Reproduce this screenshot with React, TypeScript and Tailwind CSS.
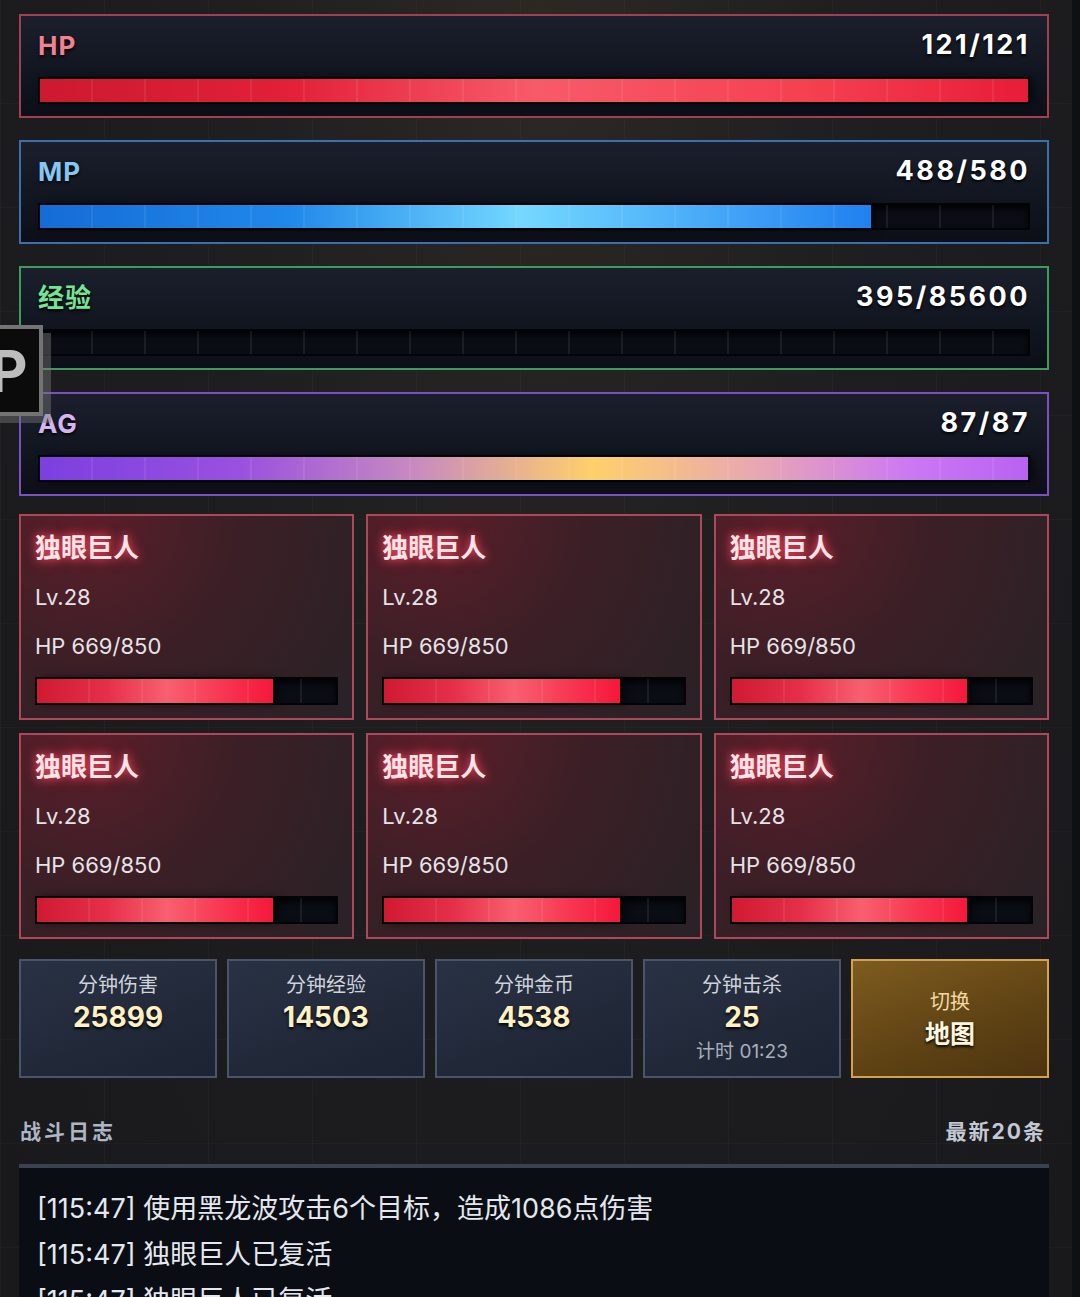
import React from 'react';

const FONT = "font-['Inter','Noto_Sans_CJK_SC',sans-serif]";

const SEGMENTS =
  'bg-[repeating-linear-gradient(90deg,transparent_0px,transparent_51px,rgba(255,255,255,0.07)_51px,rgba(255,255,255,0.07)_53px)]';

interface BarProps {
  pct: number;
  fill: string;
  height: string;
}

const Bar = ({ pct, fill, height }: BarProps) => (
  <div className={`relative ${height} border-2 border-[#030407] bg-[#0a0d14] shadow-[inset_0_4px_6px_rgba(0,0,0,0.85)]`}>
    {pct > 0 && (
      <div
        className={`h-full ${fill} shadow-[4px_0_10px_rgba(0,0,0,0.7)]`}
        style={{ width: `${pct}%` }}
      />
    )}
    <div className={`pointer-events-none absolute inset-0 ${SEGMENTS}`} />
  </div>
);

interface StatPanelProps {
  label: string;
  value: string;
  pct: number;
  border: string;
  labelColor: string;
  fill: string;
}

const StatPanel = ({ label, value, pct, border, labelColor, fill }: StatPanelProps) => (
  <div className={`h-[104px] border-2 ${border} bg-[linear-gradient(180deg,#1a1f2b_0%,#111520_60%,#0c0f17_100%)] px-[17px] pt-[14px]`}>
    <div className="flex h-[30px] items-center justify-between">
      <span className={`text-[26px] font-bold tracking-[1px] ${labelColor} [text-shadow:0_2px_3px_rgba(0,0,0,0.9)]`}>
        {label}
      </span>
      <span className="text-[27px] font-bold tracking-[2.5px] text-white [text-shadow:0_2px_3px_rgba(0,0,0,0.9)]">
        {value}
      </span>
    </div>
    <div className="mt-[17px]">
      <Bar pct={pct} fill={fill} height="h-[27px]" />
    </div>
  </div>
);

const MonsterCard = () => (
  <div className="h-[206px] border-2 border-[#b0465a] bg-[radial-gradient(circle_at_20%_0%,#5c1e2a_0%,#3c1f26_45%,#282226_100%)] px-[14px] pt-[16px]">
    <div className="h-[32px] text-[26px] font-bold leading-[32px] text-[#ffe4e8] [text-shadow:0_0_8px_rgba(255,70,95,0.95),0_0_14px_rgba(255,70,95,0.5)]">
      独眼巨人
    </div>
    <div className="mt-[19px] h-[28px] text-[22px] leading-[28px] text-[#e4e4e8]">Lv.28</div>
    <div className="mt-[21px] h-[28px] text-[22px] leading-[28px] text-[#e4e4e8]">HP 669/850</div>
    <div className="mt-[17px]">
      <Bar
        pct={78.7}
        height="h-[28px]"
        fill="bg-[linear-gradient(90deg,#cf1a32_0%,#e6304a_30%,#f8606f_55%,#f83450_80%,#f5183a_100%)]"
      />
    </div>
  </div>
);

interface MinuteBoxProps {
  label: string;
  value: string;
  extra?: string;
}

const MinuteBox = ({ label, value, extra }: MinuteBoxProps) => (
  <div className="flex h-[119px] flex-col items-center border-2 border-[#4b5566] bg-[linear-gradient(160deg,#293244_0%,#1c2332_100%)] pt-[12px]">
    <div className="h-[24px] text-[20px] leading-[24px] text-[#cfd3da]">{label}</div>
    <div className="mt-[4px] h-[32px] text-[28px] font-bold leading-[32px] text-[#fff1c2] [text-shadow:0_2px_3px_rgba(0,0,0,0.95)]">
      {value}
    </div>
    {extra && <div className="mt-[7px] h-[24px] text-[19px] leading-[24px] text-[#a9afba]">{extra}</div>}
  </div>
);

const logs = [
  '[115:47] 使用黑龙波攻击6个目标，造成1086点伤害',
  '[115:47] 独眼巨人已复活',
  '[115:47] 独眼巨人已复活',
];

export default function App() {
  return (
    <div className={`${FONT} relative flex h-[1297px] w-[1080px] overflow-hidden bg-[radial-gradient(ellipse_at_50%_0%,#2c2824_0%,#1e1e20_45%,#19191c_100%)]`}>
      <div className="pointer-events-none absolute inset-0 bg-[linear-gradient(90deg,rgba(255,255,255,0.025)_1px,transparent_1px),linear-gradient(0deg,rgba(255,255,255,0.025)_1px,transparent_1px)] bg-[size:104px_104px]" />

      <div className="relative flex w-[1072px] flex-col pl-[19px] pr-[23px] pt-[14px]">
        <div className="flex flex-col gap-[22px]">
          <StatPanel
            label="HP"
            value="121/121"
            pct={100}
            border="border-[#a3404f]"
            labelColor="text-[#f3818f]"
            fill="bg-[linear-gradient(90deg,#cc1a30_0%,#e22038_25%,#f85a6a_50%,#f5404f_78%,#e81c38_100%)]"
          />
          <StatPanel
            label="MP"
            value="488/580"
            pct={84.1}
            border="border-[#3b6fae]"
            labelColor="text-[#86c6f2]"
            fill="bg-[linear-gradient(90deg,#156cd6_0%,#2088ea_30%,#74d8ff_58%,#48aaf8_80%,#1f80f0_100%)]"
          />
          <StatPanel
            label="经验"
            value="395/85600"
            pct={0}
            border="border-[#3f9b5d]"
            labelColor="text-[#74e495]"
            fill="bg-[#3fbf6a]"
          />
          <StatPanel
            label="AG"
            value="87/87"
            pct={100}
            border="border-[#7b50c2]"
            labelColor="text-[#d4b4f2]"
            fill="bg-[linear-gradient(90deg,#7c3fe0_0%,#9a50e0_20%,#c88ac0_38%,#ffd06a_56%,#eaa8b0_72%,#cc78f4_88%,#b862f2_100%)]"
          />
        </div>

        <div className="mt-[18px] grid grid-cols-3 gap-x-[12px] gap-y-[13px]">
          {Array.from({ length: 6 }).map((_, i) => (
            <MonsterCard key={i} />
          ))}
        </div>

        <div className="mt-[20px] grid grid-cols-5 gap-[10px]">
          <MinuteBox label="分钟伤害" value="25899" />
          <MinuteBox label="分钟经验" value="14503" />
          <MinuteBox label="分钟金币" value="4538" />
          <MinuteBox label="分钟击杀" value="25" extra="计时 01:23" />
          <button className="flex h-[119px] flex-col items-center justify-center border-2 border-[#d4a24c] bg-[linear-gradient(160deg,#7e5b1f_0%,#5e4214_60%,#4c3410_100%)]">
            <span className="h-[26px] text-[20px] leading-[26px] text-[#f1d9a4]">切换</span>
            <span className="mt-[4px] h-[30px] text-[25px] font-bold leading-[30px] text-[#fff6e0] [text-shadow:0_2px_3px_rgba(0,0,0,0.9)]">
              地图
            </span>
          </button>
        </div>

        <div className="mt-[38px] flex items-center justify-between pl-[1px] pr-[3px]">
          <span className="text-[21px] font-bold tracking-[3px] text-[#aeb6c4]">战斗日志</span>
          <span className="text-[21px] font-bold tracking-[2px] text-[#c2c9d4]">最新20条</span>
        </div>

        <div className="mt-[16px] flex-1 border-t-4 border-[#3a4252] bg-[#0a0d13] px-[18px] pt-[18px]">
          {logs.map((line, i) => (
            <div key={i} className="h-[46px] text-[27px] leading-[46px] text-[#e4e8ee]">
              {line}
            </div>
          ))}
        </div>
      </div>

      <div className="relative w-[8px] bg-[#0f1014]" />

      {/* floating side tab */}
      <div className="absolute left-0 top-[333px] h-[90px] w-[51px] bg-[rgba(120,120,120,0.45)]" />
      <div className="absolute left-[-4px] top-[325px] flex h-[91px] w-[47px] items-center overflow-hidden border-4 border-[#747474] bg-[#0b0b0c]">
        <span className="ml-[-10px] text-[58px] font-bold leading-none text-[#bdbdbd]">P</span>
      </div>
    </div>
  );
}
